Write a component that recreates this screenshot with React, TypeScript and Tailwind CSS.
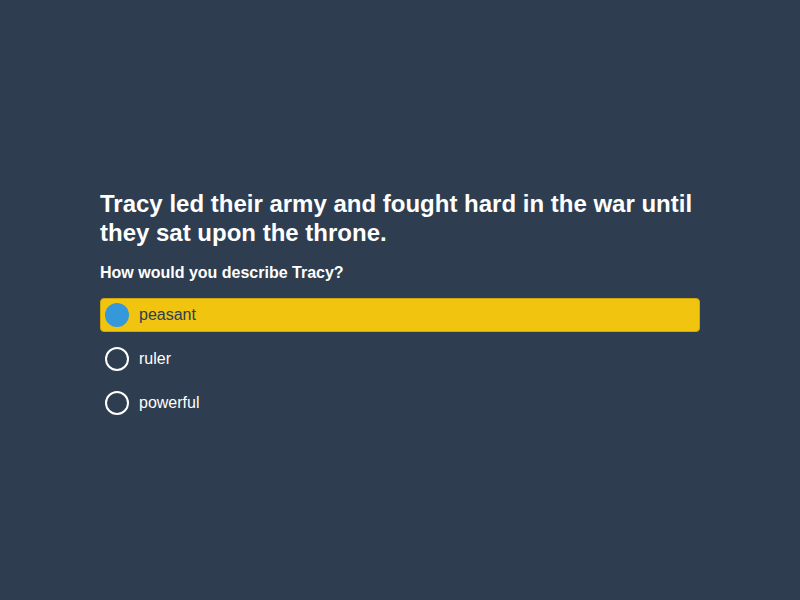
import React, { useState } from "react";

const options = ["peasant", "ruler", "powerful"];

export default function App() {
  const [selected, setSelected] = useState(0);

  return (
    <div
      className="flex h-[600px] w-[800px] items-center justify-center bg-[#2e3e50] pt-[8px] text-white"
      style={{ fontFamily: '"Liberation Sans", Arial, sans-serif' }}
    >
      <div className="w-[600px]">
        <h1 className="text-[24px] font-bold leading-[29px]">
          Tracy led their army and fought hard in the war until they sat upon the throne.
        </h1>
        <p className="mt-[16px] text-[16px] font-bold leading-[20px]">How would you describe Tracy?</p>
        <div className="mt-[15px] flex flex-col gap-[10px]">
          {options.map((opt, i) => {
            const active = i === selected;
            return (
              <button
                key={opt}
                onClick={() => setSelected(i)}
                className={
                  "flex h-[34px] w-full items-center gap-[10px] rounded-[4px] border px-[4px] text-left text-[16px] " +
                  (active
                    ? "border-[#cfa70d] bg-[#f1c40f] text-[#2c3e50]"
                    : "border-transparent bg-transparent text-white")
                }
              >
                <span
                  className={
                    "h-[24px] w-[24px] shrink-0 rounded-full " +
                    (active ? "bg-[#3498db]" : "border-2 border-white")
                  }
                />
                <span className="pt-[1px]">{opt}</span>
              </button>
            );
          })}
        </div>
      </div>
    </div>
  );
}
